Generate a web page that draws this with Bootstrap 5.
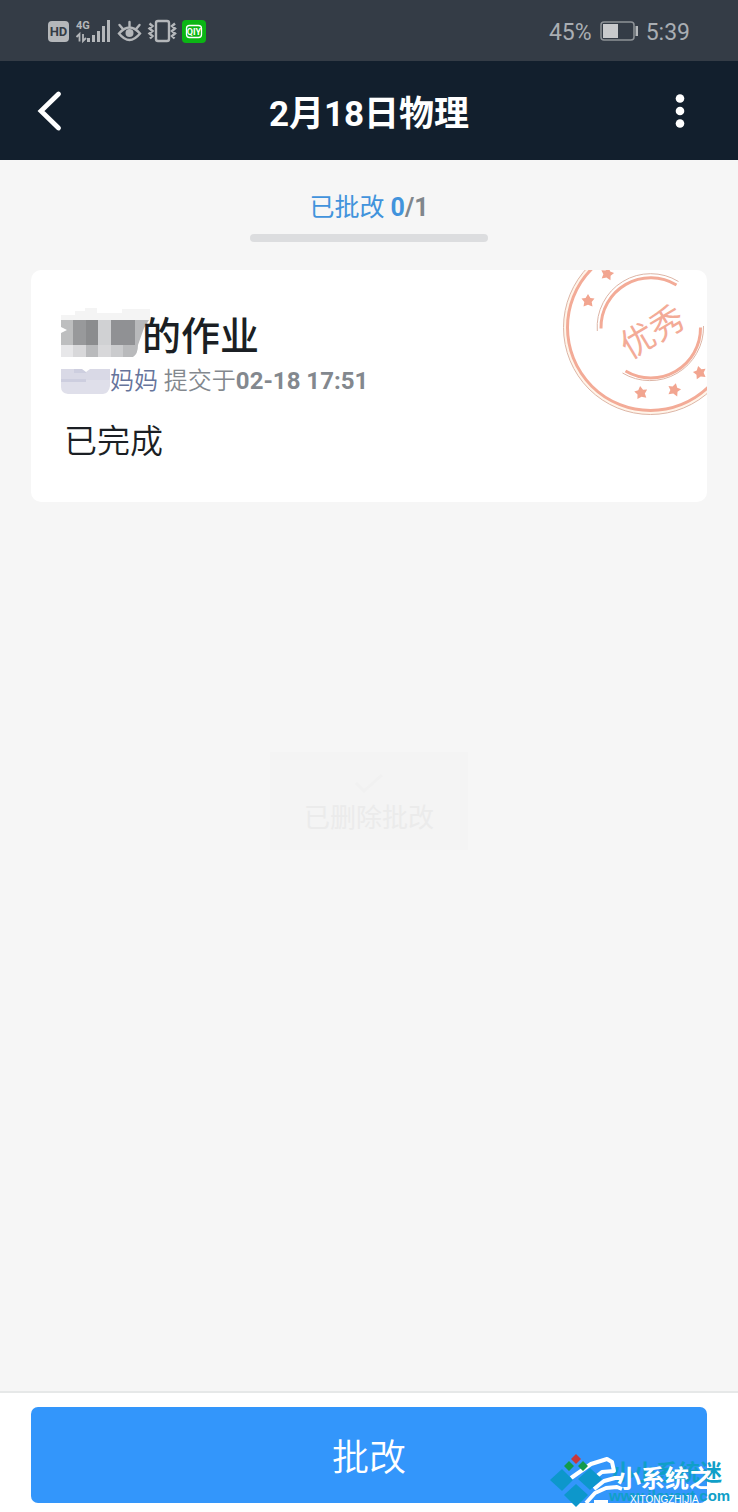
<!DOCTYPE html>
<html lang="zh-CN">
<head>
<meta charset="utf-8">
<meta name="viewport" content="width=device-width, initial-scale=1">
<title>2月18日物理</title>
<link href="https://cdn.jsdelivr.net/npm/bootstrap@5.3.0/dist/css/bootstrap.min.css" rel="stylesheet">
<style>
  body { font-family: Roboto, "Noto Sans CJK SC", sans-serif; background: #f6f6f6; color: #1b1f24; }
  svg { display: block; flex: none; }
  .status-bar { height: 61px; padding: 0 48px; background: #343c46; color: #a9aeb3; font-size: 23px; line-height: 28px; }
  .status-bar span { padding-top: 4px; }
  .title-bar { height: 99px; padding: 0 32px; background: #121f2d; color: #fff; }
  .title-bar h1 { font-size: 35px; line-height: 40px; font-weight: 700; padding-top: 8px; }
  .icon-btn { border: 0; padding: 0; background: none; color: #fff; width: 36px; height: 48px; }
  .tab-label { font-size: 25px; line-height: 30px; color: #4193dc; text-decoration: none; padding-top: 33px; }
  .tab-label b { font-weight: 700; }
  .tab-label .total { color: #80868c; }
  .graded { width: 238px; height: 8px; margin-top: 11px; background: #dcdddf; }
  .page-pad { padding-left: 31px; padding-right: 31px; }
  .work { border: 0; border-radius: 10px; margin-top: 28px; padding: 31px 30px 36px; background: #fff; }
  .work h2 { font-size: 39px; line-height: 56px; font-weight: 500; }
  .work h2 span { padding-top: 8px; }
  .work .sent { font-size: 24px; line-height: 32px; color: #83888e; font-weight: 350; }
  .sent b { font-weight: 700; }
  .sent .parent { color: #66749b; text-decoration: none; }
  .work .answer { font-size: 33px; line-height: 48px; padding: 21px 3px 0; font-weight: 350; }
  .toast-layer { top: 90px; pointer-events: none; }
  .notice { background: #f4f4f4; color: #ebebeb; font-size: 26px; line-height: 32px; padding: 22px 34px 16px; }
  .bottom-bar { background: #fff; border-top: 2px solid #e6e8e8; padding-top: 14px; padding-bottom: 9px; }
  .grade-btn { height: 96px; border: 0; border-radius: 7px; background: #3396fb; color: #fff; font-size: 37px; line-height: 44px; font-weight: 350; padding-top: 14px; }
  .grade-btn:hover { background: #2789f0; color: #fff; }
  .site-mark { pointer-events: none; }
</style>
</head>
<body class="min-vh-100 d-flex flex-column">

<div class="status-bar d-flex align-items-center justify-content-between">
  <svg width="160" height="28" viewBox="48 17 160 28" aria-label="HD 4G">
    <rect x="48" y="21" width="21" height="21" rx="4" fill="#b4b7ba"/>
    <text x="58.500" y="36" font-family="Roboto" font-size="13" font-weight="700" text-anchor="middle" fill="#343c46">HD</text>
    <text x="76" y="29" font-family="Roboto" font-size="11" font-weight="700" fill="#b4b7ba">4G</text>
    <path d="M76.500 37 L79.500 34 V41.500 M83 34 V41 L86 38" fill="none" stroke="#b4b7ba" stroke-width="1.800"/>
    <path d="M88.500 38 V42 M93.500 35 V42 M98.500 31 V42 M103.500 26 V42 M108.500 20 V42" stroke="#b4b7ba" stroke-width="3"/>
    <g fill="none" stroke="#b4b7ba" stroke-width="2.400" stroke-linecap="round">
      <path d="M119 33.500 Q129.500 21.500 140 33.500 Q129.500 46.500 119 33.500Z"/>
      <path d="M129.500 22 V26 M119.500 25 L122.500 28.500 M139.500 25 L136.500 28.500"/>
    </g>
    <circle cx="129.500" cy="33" r="4" fill="#b4b7ba"/>
    <g fill="none" stroke="#b4b7ba" stroke-width="2.400">
      <rect x="156" y="21" width="13" height="20" rx="2"/>
      <path d="M149.500 23.500 L152.500 26 L149.500 28.500 L152.500 31 L149.500 33.500 L152.500 36 L150 38.500 M175 23.500 L172 26 L175 28.500 L172 31 L175 33.500 L172 36 L174.500 38.500"/>
    </g>
    <rect x="182" y="20" width="24" height="23" rx="4" fill="#0bb514"/>
    <rect x="186.500" y="25.500" width="15" height="12" rx="3" fill="none" stroke="#fff" stroke-width="1.300"/>
    <text x="194" y="35" font-family="Roboto" font-size="9" font-weight="700" text-anchor="middle" fill="#fff">QIY</text>
  </svg>
  <div class="d-flex align-items-center">
    <span>45%</span>
    <svg class="mx-2" width="38" height="20" viewBox="0 0 38 20" aria-hidden="true">
      <rect x="1" y="1" width="33" height="18" rx="3" fill="none" stroke="#8d9297" stroke-width="1.500"/>
      <rect x="3" y="3" width="15" height="14" fill="#c8cacc"/>
      <rect x="35.500" y="5" width="2.500" height="10" fill="#b4b7ba"/>
    </svg>
    <span>5:39</span>
  </div>
</div>

<header class="title-bar d-flex align-items-center justify-content-between">
  <button type="button" class="icon-btn" aria-label="返回">
    <svg width="36" height="48" viewBox="0 0 36 48"><path d="M26.500 7 L9 24 L26.500 41" fill="none" stroke="#fff" stroke-width="4.800" stroke-linecap="round"/></svg>
  </button>
  <h1 class="m-0">2月18日物理</h1>
  <button type="button" class="icon-btn" aria-label="更多">
    <svg width="36" height="48" viewBox="0 0 36 48" fill="#fff"><circle cx="10" cy="11.500" r="4.300"/><circle cx="10" cy="24" r="4.300"/><circle cx="10" cy="36.500" r="4.300"/></svg>
  </button>
</header>

<main class="flex-grow-1 page-pad">
  <div class="d-flex flex-column align-items-center">
    <a href="#graded" class="tab-label">已批改 <b>0</b><b class="total">/1</b></a>
    <div class="graded rounded-pill" role="progressbar" aria-label="已批改" aria-valuenow="0" aria-valuemin="0" aria-valuemax="1"></div>
  </div>

  <article class="card work overflow-hidden" id="graded">
    <h2 class="m-0 d-flex align-items-center">
      <svg class="overflow-visible" width="81" height="52" viewBox="61 307 81 52" aria-hidden="true">
        <path fill="#f4f4f4" d="M75 311H85V308H97V313H122V309H150V320H61V315H75Z"/>
        <path fill="#bdbebf" d="M61 320H73V345H61Z"/>
        <path fill="#98999b" d="M73 320H86V345H73Z"/>
        <path fill="#8b8c8e" d="M86 320H98V345H86Z"/>
        <path fill="#d0d1d3" d="M98 320H111V345H98Z"/>
        <path fill="#909194" d="M111 320H135V345H111Z"/>
        <path fill="#b8b9bb" d="M135 320H149L144 328L138 345H135Z"/>
        <path fill="#e7e7e9" d="M61 345H73V357H61Z"/>
        <path fill="#d8d8da" d="M73 345H86V357H73Z M98 345H111V357H98Z"/>
        <path fill="#b9babc" d="M86 345H98V357H86Z M123 345H138Q138 354 133 357H123Z"/>
        <path fill="#cacbcd" d="M111 345H123V357H111Z"/>
        <path fill="#fff" d="M61 327L67 330L61 333Z"/>
      </svg>
      <span>的作业</span>
    </h2>
    <div class="sent d-flex align-items-center">
      <svg width="49" height="26" viewBox="61 368 49 26" aria-hidden="true">
        <path fill="#d9d9e6" d="M61 369H110V380H61Z"/>
        <path fill="#dfdfea" d="M61 380H110V386Q109 393 103 394H68Q61 393 61 387Z"/>
        <path fill="#cdcedf" d="M61 379H86V382H61Z M74 369H86V373H74Z"/>
        <path fill="#fff" d="M82 369H90L86 372Z"/>
      </svg>
      <span><a href="#parent" class="parent">妈妈</a> 提交于<b>02-18 17:51</b></span>
    </div>
    <p class="answer m-0">已完成</p>

    <svg class="position-absolute top-0 end-0" width="145" height="146" viewBox="562 270 145 146" role="img" aria-label="优秀">
      <g fill="none">
        <circle cx="650.500" cy="327.500" r="85" stroke="#fff5ea" stroke-width="4"/>
        <circle cx="650.500" cy="327.500" r="87" stroke="#dcb5a6"/>
        <circle cx="650.500" cy="327.500" r="83" stroke="#f3ab97" stroke-width="3"/>
        <path d="M597.300 331 A53.500 53.500 0 0 1 678.500 281.500 M703.500 326 A53.500 53.500 0 0 1 622.500 373" stroke="#dcb5a6"/>
        <path d="M601 328.500 A49.700 49.700 0 0 1 676.500 285 M700.500 327.500 A49.700 49.700 0 0 1 625.500 371" stroke="#f3ab97" stroke-width="3"/>
      </g>
      <defs><path id="star" d="M0 -6.500 L2.400 -2.500 L6.500 -2 L3.700 1.500 L4.500 6 L0 4.200 L-4.500 6 L-3.700 1.500 L-6.500 -2 L-2.400 -2.500Z"/></defs>
      <g fill="#f2a590">
        <use href="#star" transform="translate(588 300.500)"/>
        <use href="#star" transform="translate(607.300 273.500) rotate(12)"/>
        <use href="#star" transform="translate(641 392.500) rotate(-8)"/>
        <use href="#star" transform="translate(674.300 389.500) rotate(14)"/>
        <use href="#star" transform="translate(699.700 372.300) rotate(-14)"/>
      </g>
      <text transform="translate(652.500 332) rotate(-31)" y="12" text-anchor="middle" font-family="Noto Sans CJK SC" font-size="34" fill="#f3ab97">优秀</text>
    </svg>
  </article>
</main>

<footer class="bottom-bar page-pad position-relative">
  <button type="button" class="btn grade-btn w-100">批改</button>
  <svg class="site-mark position-absolute bottom-0 end-0" width="190" height="66" viewBox="548 1446 190 66" aria-hidden="true">
    <g fill="#109fc8">
      <text x="612" y="1480" font-family="Noto Sans CJK SC" font-size="22" font-weight="700">小小系统迷</text>
      <text x="609" y="1501" font-family="Liberation Sans" font-size="15" font-weight="700">www.ilovext.com</text>
    </g>
    <g fill="none" stroke="#fff" stroke-width="4" stroke-linejoin="round">
      <path d="M571 1478L591 1464L607 1459L612 1462L614 1471L602 1472L592 1480"/>
      <path d="M594 1489L604 1481L615 1478L622 1478"/>
      <path d="M586 1503L595 1493L606 1488L617 1487L622 1489"/>
      <path d="M594 1502H608"/>
    </g>
    <g fill="#fff">
      <text x="617" y="1487" font-family="Noto Sans CJK SC" font-size="24" font-weight="700">小系统之</text>
      <text x="630" y="1503" font-family="Liberation Sans" font-size="10">XITONGZHIJIA</text>
    </g>
    <g fill="#0d97cb">
      <path d="M562 1469L573 1480L562 1491L550 1480Z"/>
      <path d="M590 1468L602 1479L590 1490L578 1479Z"/>
      <path d="M576 1484L588 1495L576 1507L564 1495Z"/>
    </g>
    <path fill="#c9383c" d="M576 1454L581 1459L576 1464L571 1459Z"/>
    <path fill="#129a4c" d="M569 1461L574 1466L569 1471L564 1466Z M583 1461L588 1466L583 1471L578 1466Z"/>
  </svg>
</footer>

<div class="toast-layer position-fixed start-0 end-0 bottom-0 d-flex align-items-center justify-content-center">
  <div class="notice d-flex flex-column align-items-center" role="status">
    <svg width="32" height="28" viewBox="0 0 32 28" aria-hidden="true"><path d="M3 9 L11 17 L29 1" fill="none" stroke="#f1f1f1" stroke-width="3"/></svg>
    <span>已删除批改</span>
  </div>
</div>

<script src="https://cdn.jsdelivr.net/npm/bootstrap@5.3.0/dist/js/bootstrap.bundle.min.js"></script>
</body>
</html>
